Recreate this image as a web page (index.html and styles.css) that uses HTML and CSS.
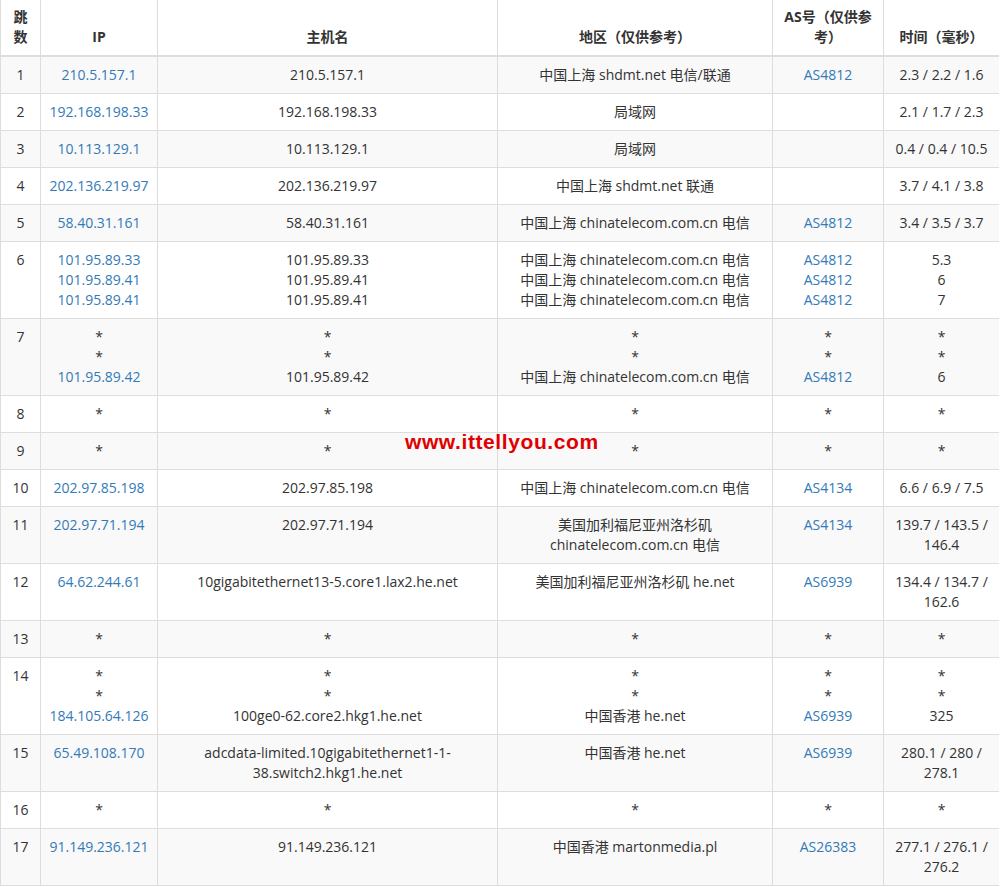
FILE: index.html
```html
<!DOCTYPE html>
<html lang="zh-CN">
<head>
<meta charset="utf-8">
<title>路由追踪</title>
<link rel="stylesheet" href="styles.css">
</head>
<body>
<div class="wrap">
<table class="trace">
<colgroup>
<col class="c-hop"><col class="c-ip"><col class="c-host"><col class="c-area"><col class="c-as"><col class="c-time">
</colgroup>
<thead>
<tr><th>跳数</th><th>IP</th><th>主机名</th><th>地区（仅供参考）</th><th>AS号（仅供参考）</th><th>时间（毫秒）</th></tr>
</thead>
<tbody>
<tr><td>1</td><td><a>210.5.157.1</a></td><td>210.5.157.1</td><td>中国上海 shdmt.net 电信/联通</td><td><a>AS4812</a></td><td>2.3 / 2.2 / 1.6</td></tr>
<tr><td>2</td><td><a>192.168.198.33</a></td><td>192.168.198.33</td><td>局域网</td><td></td><td>2.1 / 1.7 / 2.3</td></tr>
<tr><td>3</td><td><a>10.113.129.1</a></td><td>10.113.129.1</td><td>局域网</td><td></td><td>0.4 / 0.4 / 10.5</td></tr>
<tr><td>4</td><td><a>202.136.219.97</a></td><td>202.136.219.97</td><td>中国上海 shdmt.net 联通</td><td></td><td>3.7 / 4.1 / 3.8</td></tr>
<tr><td>5</td><td><a>58.40.31.161</a></td><td>58.40.31.161</td><td>中国上海 chinatelecom.com.cn 电信</td><td><a>AS4812</a></td><td>3.4 / 3.5 / 3.7</td></tr>
<tr><td>6</td><td><a>101.95.89.33</a><br><a>101.95.89.41</a><br><a>101.95.89.41</a></td><td>101.95.89.33<br>101.95.89.41<br>101.95.89.41</td><td>中国上海 chinatelecom.com.cn 电信<br>中国上海 chinatelecom.com.cn 电信<br>中国上海 chinatelecom.com.cn 电信</td><td><a>AS4812</a><br><a>AS4812</a><br><a>AS4812</a></td><td>5.3<br>6<br>7</td></tr>
<tr><td>7</td><td>*<br>*<br><a>101.95.89.42</a></td><td>*<br>*<br>101.95.89.42</td><td>*<br>*<br>中国上海 chinatelecom.com.cn 电信</td><td>*<br>*<br><a>AS4812</a></td><td>*<br>*<br>6</td></tr>
<tr><td>8</td><td>*</td><td>*</td><td>*</td><td>*</td><td>*</td></tr>
<tr><td>9</td><td>*</td><td>*</td><td>*</td><td>*</td><td>*</td></tr>
<tr><td>10</td><td><a>202.97.85.198</a></td><td>202.97.85.198</td><td>中国上海 chinatelecom.com.cn 电信</td><td><a>AS4134</a></td><td>6.6 / 6.9 / 7.5</td></tr>
<tr><td>11</td><td><a>202.97.71.194</a></td><td>202.97.71.194</td><td>美国加利福尼亚州洛杉矶<br>chinatelecom.com.cn 电信</td><td><a>AS4134</a></td><td>139.7 / 143.5 /<br>146.4</td></tr>
<tr><td>12</td><td><a>64.62.244.61</a></td><td>10gigabitethernet13-5.core1.lax2.he.net</td><td>美国加利福尼亚州洛杉矶 he.net</td><td><a>AS6939</a></td><td>134.4 / 134.7 /<br>162.6</td></tr>
<tr><td>13</td><td>*</td><td>*</td><td>*</td><td>*</td><td>*</td></tr>
<tr><td>14</td><td>*<br>*<br><a>184.105.64.126</a></td><td>*<br>*<br>100ge0-62.core2.hkg1.he.net</td><td>*<br>*<br>中国香港 he.net</td><td>*<br>*<br><a>AS6939</a></td><td>*<br>*<br>325</td></tr>
<tr><td>15</td><td><a>65.49.108.170</a></td><td>adcdata-limited.10gigabitethernet1-1-<br>38.switch2.hkg1.he.net</td><td>中国香港 he.net</td><td><a>AS6939</a></td><td>280.1 / 280 /<br>278.1</td></tr>
<tr><td>16</td><td>*</td><td>*</td><td>*</td><td>*</td><td>*</td></tr>
<tr><td>17</td><td><a>91.149.236.121</a></td><td>91.149.236.121</td><td>中国香港 martonmedia.pl</td><td><a>AS26383</a></td><td>277.1 / 276.1 /<br>276.2</td></tr>
</tbody>
</table>
<div class="watermark">www.ittellyou.com</div>
</div>
</body>
</html>
```

FILE: styles.css
```css
html, body {
  margin: 0;
  padding: 0;
  background: #fff;
}

body {
  font-family: "Open Sans", "Noto Sans CJK SC", sans-serif;
  font-size: 14px;
  line-height: 20px;
  color: #333;
}

.wrap {
  position: relative;
  width: 999px;
  overflow: hidden;
  height: 887px;
}

.trace {
  width: 999px;
  margin-top: -2px;
  border-collapse: collapse;
  table-layout: fixed;
  border: 1px solid #ddd;
}

.c-hop { width: 40px; }
.c-ip { width: 117px; }
.c-host { width: 340px; }
.c-area { width: 275px; }
.c-as { width: 111px; }
.c-time { width: 116px; }

.trace th,
.trace td {
  border: 1px solid #ddd;
  padding: 8px;
  text-align: center;
  vertical-align: top;
}

.trace th {
  font-weight: bold;
  vertical-align: bottom;
  border-bottom: 2px solid #ddd;
}

.trace tbody tr:nth-child(odd) {
  background: #f9f9f9;
}

.trace a {
  color: #337ab7;
  text-decoration: none;
}

.watermark {
  position: absolute;
  left: 405px;
  top: 430px;
  font-family: "Liberation Sans", Arial, sans-serif;
  font-weight: bold;
  font-size: 21px;
  line-height: 24px;
  letter-spacing: 0.6px;
  color: #e00000;
}
```
